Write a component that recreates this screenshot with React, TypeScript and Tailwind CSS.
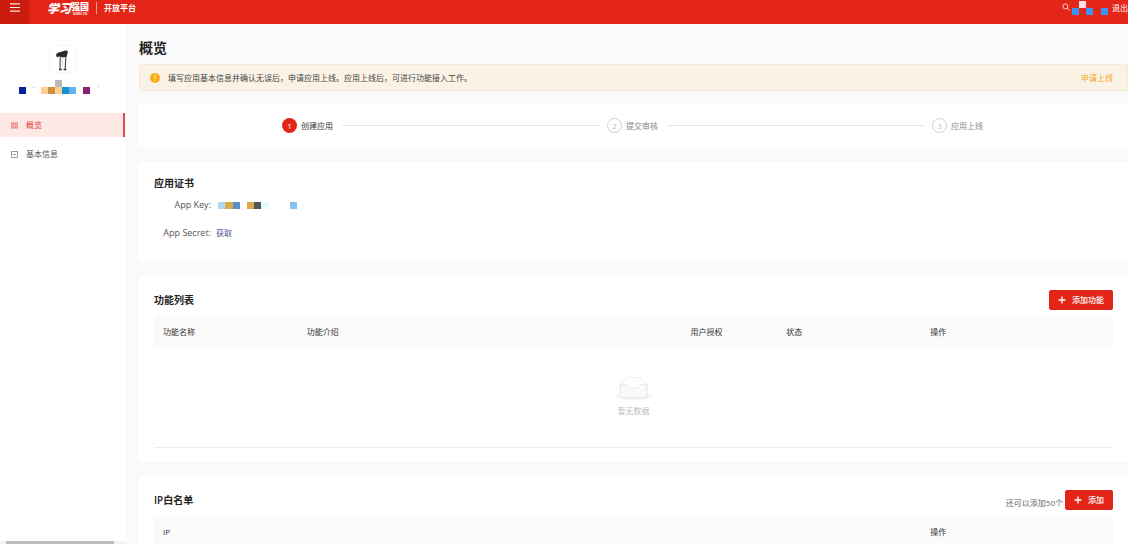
import React from "react";

const FONT = "font-['Open_Sans','Noto_Sans_CJK_SC',sans-serif]";

function PlusIcon() {
  return (
    <svg viewBox="0 0 8 8" className="h-2 w-2 shrink-0" aria-hidden="true">
      <path d="M4 0.5v7M0.5 4h7" stroke="currentColor" strokeWidth="1.3" fill="none" />
    </svg>
  );
}

function Header() {
  return (
    <header className="flex h-6 shrink-0 bg-[#e42618] text-white">
      <button type="button" aria-label="菜单" className="flex w-[29px] justify-center bg-[#cb1c10] pt-[3px]">
        <svg viewBox="0 0 10 9" className="h-[9px] w-[10px]" aria-hidden="true">
          <path d="M0 0.9h10M0 4.5h10M0 8.1h10" stroke="#ffe5e0" strokeWidth="1.2" />
        </svg>
      </button>
      <a href="#home" className="ml-[18px] flex h-4 items-start whitespace-nowrap">
        <span className="w-6 text-[12px] leading-[15px] font-black italic font-['Noto_Sans_CJK_SC',sans-serif]">学习</span>
        <span className="flex w-[18px] flex-col items-center gap-[2px] pt-[2px]">
          <span className="text-[9px] leading-[9px] font-black">强国</span>
          <span className="text-[3px] leading-[3px] font-bold">XUEXI.CN</span>
        </span>
        <span className="mx-[7px] mt-[2px] h-3 w-px bg-[#f49b94]" />
        <span className="text-[8px] leading-[15px] font-bold">开放平台</span>
      </a>
      <div className="ml-auto flex h-4 items-start">
        <button type="button" aria-label="搜索" className="mt-[3px] mr-[2px]">
          <svg viewBox="0 0 8 8" className="h-2 w-2" aria-hidden="true">
            <circle cx="3.4" cy="3.4" r="2.5" stroke="#ffd0ca" strokeWidth="1" fill="none" />
            <path d="M5.2 5.2L7.6 7.6" stroke="#ffd0ca" strokeWidth="1" />
          </svg>
        </button>
        <svg viewBox="0 0 36 15" className="h-[15px] w-9" aria-hidden="true">
          <path d="M0 8h7v7H0zM14 8h7v7h-7zM29 8h7v7h-7z" fill="#3d92f5" />
          <path d="M7 1h7v7H7z" fill="#ffdcec" />
        </svg>
        <a href="#logout" className="ml-1 text-[8px] leading-[15px]">退出</a>
      </div>
    </header>
  );
}

function Sidebar() {
  return (
    <aside className="flex w-[125px] shrink-0 flex-col bg-white">
      <div className="flex h-[89px] flex-col items-center pt-[21px]">
        <svg viewBox="0 0 28 28" className="h-7 w-7 shrink-0" aria-label="应用图标">
          <rect x="0.5" y="0.5" width="27" height="27" rx="2" fill="#fff" stroke="#f8f8f8" />
          <path d="M7 10C8 7 12 7 14 6.2C16 5 19 5.500 18.800 7.500L17.500 12L13 12.500L10.500 11.200L8 12.500Z" fill="#292929" />
          <path d="M11.200 11L11 24.500M16.800 11L16.200 24.500" stroke="#555" strokeWidth="1.200" fill="none" />
          <path d="M13.500 12v10" stroke="#ccc" strokeWidth="0.800" />
          <path d="M10 24.500h2.800M14.500 24.500h2.800" stroke="#333" strokeWidth="1.400" />
        </svg>
        <svg viewBox="0 0 88 15" className="mt-[7px] h-[15px] w-[88px] shrink-0" aria-hidden="true">
          <path d="M0 7h7v7H0z" fill="#0a1f9e" />
          <path d="M22 7h7v7h-7zM36 7h7v7h-7z" fill="#ffcf94" />
          <path d="M29 7h7v7h-7z" fill="#ca9140" />
          <path d="M36 0h7v7h-7z" fill="#b9b9b9" />
          <path d="M43 7h7v7h-7z" fill="#1790d2" />
          <path d="M50 7h7v7h-7z" fill="#62b1f1" />
          <path d="M64 7h7v7h-7z" fill="#8d1f70" />
          <path d="M14 7h1v1h-1zM79 6h1v1h-1z" fill="#aaa" />
        </svg>
      </div>
      <nav className="flex flex-col gap-1 text-[8px]">
        <a href="#overview" className="flex h-6 items-center border-r-2 border-[#dc4a4d] bg-[#fee9e5] pl-[11px] text-[#e23a38]">
          <svg viewBox="0 0 8 8" className="mr-2 h-[7px] w-[7px]" aria-hidden="true">
            <path d="M0.700 1h2.600v2.300H0.700zM4.700 1h2.600v2.300H4.700zM0.700 4.700h2.600V7H0.700zM4.700 4.700h2.600V7H4.700z" fill="none" stroke="#e5605c" strokeWidth="0.900" />
          </svg>
          概览
        </a>
        <a href="#basic" className="flex h-6 items-center pt-[2px] pl-[11px] text-[#555]">
          <svg viewBox="0 0 8 8" className="mr-2 h-[7px] w-[7px]" aria-hidden="true">
            <path d="M0.500 0.500h7v7h-7zM2.300 4h3.400" fill="none" stroke="#777" strokeWidth="0.900" />
          </svg>
          基本信息
        </a>
      </nav>
      <div className="mt-auto flex h-[3px] items-stretch bg-[#f1f1f1] pr-[11px] pl-[6px]">
        <span className="flex-1 bg-[#bdbdbd]" />
      </div>
    </aside>
  );
}

function Steps() {
  const steps = ["创建应用", "提交审核", "应用上线"];
  return (
    <ol className="mt-[13px] flex h-[43px] items-center bg-white px-[143px] text-[8px]">
      {steps.map((label, i) => (
        <React.Fragment key={label}>
          {i > 0 && <li aria-hidden="true" className="mx-[7px] h-px flex-1 bg-[#e6e6e6]" />}
          <li className="flex items-center gap-1">
            <span
              className={
                i === 0
                  ? "flex h-[15px] w-[15px] items-center justify-center rounded-full bg-[#e42618] text-white"
                  : "flex h-[15px] w-[15px] items-center justify-center rounded-full border border-[#cfcfcf] text-[#bbb]"
              }
            >
              {i + 1}
            </span>
            <span className={i === 0 ? "w-[34px] text-[#333]" : "w-[34px] text-[#888]"}>{label}</span>
          </li>
        </React.Fragment>
      ))}
    </ol>
  );
}

const TITLE = "text-[10px] leading-4 font-semibold text-[#222]";
const TH = "pl-[9px] text-left font-normal";
const BUTTON =
  "flex h-5 items-center gap-1.5 rounded-[2px] bg-[#e42618] px-[9px] text-[8px] font-medium text-white";

function EmptyBox() {
  return (
    <svg viewBox="0 0 64 41" className="h-6 w-[37px]" aria-hidden="true">
      <ellipse cx="32" cy="33" rx="32" ry="7" fill="#f5f5f5" />
      <g fillRule="nonzero" stroke="#d9d9d9">
        <path d="M55 12.760L44.854 1.258C44.367.474 43.656 0 42.907 0H21.093c-.749 0-1.460.474-1.947 1.257L9 12.761V22h46v-9.240z" fill="#fff" />
        <path d="M41.613 15.931c0-1.605.994-2.930 2.227-2.931H55v18.137C55 33.260 53.680 35 52.050 35h-40.100C10.320 35 9 33.259 9 31.137V13h11.160c1.233 0 2.227 1.323 2.227 2.928v.022c0 1.605 1.005 2.901 2.237 2.901h14.752c1.232 0 2.237-1.308 2.237-2.913v-.007z" fill="#fafafa" />
      </g>
    </svg>
  );
}

export default function App() {
  return (
    <div className={`flex h-screen flex-col overflow-hidden bg-[#fafafa] text-[#333] ${FONT}`}>
      <Header />
      <div className="flex min-h-0 flex-1">
        <Sidebar />
        <main className="min-w-0 flex-1 overflow-hidden pl-[14px]">
          <h1 className="pt-[14px] pb-[6px] text-[14px] leading-5 font-bold text-[#222]">概览</h1>
          <div role="alert" className="flex h-[27px] items-center rounded-[2px] border border-[#f8ead0] bg-[#faf2e5] pr-[14px] pl-[10px] text-[8px] text-[#444]">
            <svg viewBox="0 0 10 10" className="mr-2 h-[10px] w-[10px]" aria-hidden="true">
              <circle cx="5" cy="5" r="5" fill="#f9ad14" />
              <path d="M5 2.200v3.500M5 6.800v1" stroke="#fff" strokeWidth="0.900" />
            </svg>
            <p>填写应用基本信息并确认无误后，申请应用上线。应用上线后，可进行功能接入工作。</p>
            <a href="#apply" className="ml-auto text-[#f5a623]">申请上线</a>
          </div>
          <Steps />

          <section className="mt-[15px] h-[99px] bg-white px-[15px] pt-[13px]">
            <h2 className={TITLE}>应用证书</h2>
            <dl className="grid grid-cols-[57px_1fr] items-center gap-x-[5px] text-[9px] leading-[28px] text-[#555]">
              <dt className="text-right whitespace-nowrap">App Key:</dt>
              <dd className="pl-[2px]">
                <svg viewBox="0 0 80 7" className="block h-[7px] w-20" aria-label="App Key">
                  <path d="M0 0h7v7H0z" fill="#b1d7f7" />
                  <path d="M7 0h8v7H7zM29 0h7v7h-7z" fill="#dba84e" />
                  <path d="M15 0h7v7h-7z" fill="#5a8fca" />
                  <path d="M36 0h7v7h-7z" fill="#555" />
                  <path d="M43 0h8v7h-8z" fill="#dffcff" />
                  <path d="M72 0h7v7h-7z" fill="#8bc1ee" />
                </svg>
              </dd>
              <dt className="text-right whitespace-nowrap">App Secret:</dt>
              <dd>
                <a href="#secret" className="text-[8px] text-[#4a548c]">获取</a>
              </dd>
            </dl>
          </section>

          <section className="mt-[15px] bg-white px-[15px] pt-[14px] pb-[14px]">
            <div className="flex h-[25px] items-start justify-between">
              <h2 className={`${TITLE} pt-[2px]`}>功能列表</h2>
              <button type="button" className={BUTTON}>
                <PlusIcon />
                添加功能
              </button>
            </div>
            <table className="w-full table-fixed border-collapse text-[8px]">
              <thead>
                <tr className="h-[33px] bg-[#fafafa]">
                  <th className={`${TH} w-[15%]`}>功能名称</th>
                  <th className={`${TH} w-[40%]`}>功能介绍</th>
                  <th className={`${TH} w-[10%]`}>用户授权</th>
                  <th className={`${TH} w-[15%]`}>状态</th>
                  <th className={`${TH} w-[20%]`}>操作</th>
                </tr>
              </thead>
              <tbody>
                <tr className="h-[99px] border-b border-[#ececec]">
                  <td colSpan={5}>
                    <div className="flex flex-col items-center gap-1 text-[#bbb]">
                      <EmptyBox />
                      暂无数据
                    </div>
                  </td>
                </tr>
              </tbody>
            </table>
          </section>

          <section className="mt-[14px] bg-white px-[15px] pt-[14px] pb-[14px]">
            <div className="flex h-[26px] items-start">
              <h2 className={`${TITLE} pt-[2px]`}>IP白名单</h2>
              <span className="mt-[7px] mr-[2px] ml-auto text-[8px] leading-3 text-[#666]">还可以添加50个</span>
              <button type="button" className={BUTTON}>
                <PlusIcon />
                添加
              </button>
            </div>
            <table className="w-full table-fixed border-collapse text-[8px]">
              <thead>
                <tr className="h-[32px] bg-[#fafafa]">
                  <th className={`${TH} w-[80%]`}>IP</th>
                  <th className={`${TH} w-[20%]`}>操作</th>
                </tr>
              </thead>
            </table>
          </section>
        </main>
      </div>
    </div>
  );
}
